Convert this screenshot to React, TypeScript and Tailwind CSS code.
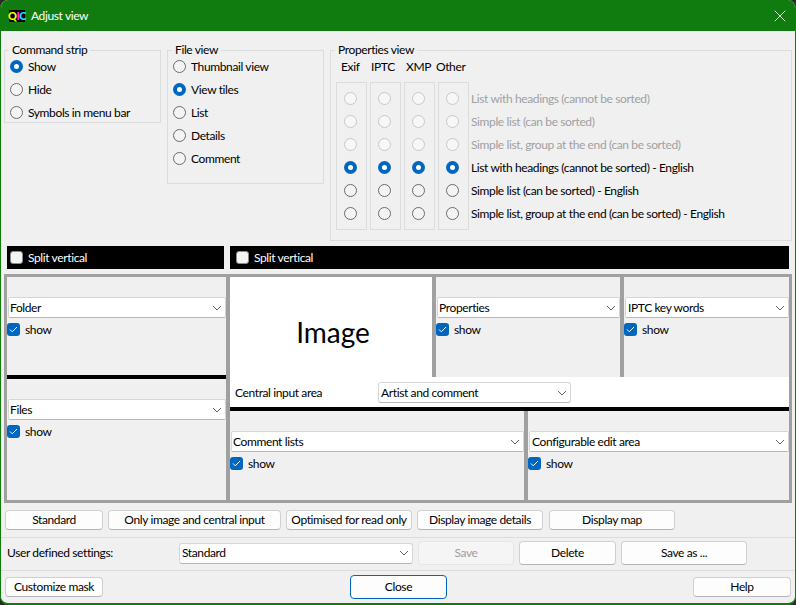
import { X } from "lucide-react";

const FONT = "font-['Lato','Noto_Sans',sans-serif]";

function Radio({ checked, disabled }: { checked?: boolean; disabled?: boolean }) {
  if (checked) {
    return (
      <span className="flex h-[13px] w-[13px] shrink-0 items-center justify-center rounded-full bg-[#0067c0]">
        <span className="h-[5px] w-[5px] rounded-full bg-white" />
      </span>
    );
  }
  return (
    <span
      className={
        disabled
          ? "h-[13px] w-[13px] shrink-0 rounded-full border border-[#c8c8c8] bg-[#f7f7f7]"
          : "h-[13px] w-[13px] shrink-0 rounded-full border border-[#6b6b6b] bg-[#f4f4f4]"
      }
    />
  );
}

function RadioRow({ label, checked }: { label: string; checked?: boolean }) {
  return (
    <div className="flex h-[23px] items-center gap-[5px]">
      <Radio checked={checked} />
      <span>{label}</span>
    </div>
  );
}

function Chevron() {
  return (
    <svg width="10" height="6" viewBox="0 0 10 6" fill="none" className="shrink-0">
      <path d="M1 1l4 4 4-4" stroke="#5f5f5f" strokeWidth="1" />
    </svg>
  );
}

function Combo({ label, className }: { label: string; className: string }) {
  return (
    <div
      className={`flex h-[21px] items-center justify-between rounded-[2px] border border-[#d6d6d6] border-b-[#b8b8b8] bg-white pr-[3px] ${className}`}
    >
      <span>{label}</span>
      <Chevron />
    </div>
  );
}

function ShowCheck() {
  return (
    <div className="mt-[5px] flex h-[13px] items-center gap-[5px]">
      <span className="flex h-[13px] w-[13px] items-center justify-center rounded-[3px] bg-[#0067c0]">
        <svg width="9" height="7" viewBox="0 0 9 7" fill="none">
          <path d="M1 3.5l2.3 2.3L8 1" stroke="#fff" strokeWidth="1" />
        </svg>
      </span>
      <span>show</span>
    </div>
  );
}

function SplitBar({ className }: { className: string }) {
  return (
    <div className={`flex h-[23px] items-center gap-[5px] bg-black text-white ${className}`}>
      <span className="h-[13px] w-[13px] rounded-[3px] border border-[#8a8a8a] bg-[#f4f4f4]" />
      <span>Split vertical</span>
    </div>
  );
}

function Btn({ label, className, disabled }: { label: string; className: string; disabled?: boolean }) {
  return (
    <button
      className={`flex h-[20px] items-center justify-center whitespace-nowrap rounded-[4px] border ${
        disabled
          ? "border-[#e6e6e6] bg-[#f5f5f5] text-[#9d9d9d]"
          : "border-[#d0d0d0] border-b-[#b4b4b4] bg-[#fdfdfd] text-black"
      } ${className}`}
    >
      {label}
    </button>
  );
}

const propRows = [
  { label: "List with headings (cannot be sorted)", disabled: true },
  { label: "Simple list (can be sorted)", disabled: true },
  { label: "Simple list, group at the end (can be sorted)", disabled: true },
  { label: "List with headings (cannot be sorted) - English", checked: true },
  { label: "Simple list (can be sorted) - English" },
  { label: "Simple list, group at the end (can be sorted) - English" },
];

export default function App() {
  return (
    <div className={`h-[605px] w-[796px] overflow-hidden bg-[#2a2a2a] text-[12px] leading-[16px] tracking-[-0.38px] text-black ${FONT}`}>
      <div className="flex h-full flex-col overflow-hidden rounded-[8px] border-x border-b-2 border-[#107c10] bg-[#f0f0f0]">
        {/* title bar */}
        <div className="-mx-px flex h-[31px] shrink-0 items-center bg-[#107c10] pl-[9px] pr-[9px] text-white">
          <span className="flex h-[12px] w-[16px] items-center justify-center bg-black text-[11px] font-black leading-none tracking-[-0.5px]">
            <span className="text-[#ffff00]">Q</span>
            <span className="text-[#ff30ff]">I</span>
            <span className="text-[#20e0ff]">C</span>
          </span>
          <span className="ml-[6px]">Adjust view</span>
          <X size={20} strokeWidth={1} className="ml-auto mr-[-3px] text-white" />
        </div>

        {/* group boxes */}
        <div className="mt-[11px] flex h-[199px] shrink-0 items-start pl-[3px]">
          <fieldset className="h-[81px] w-[157px] border border-[#dcdcdc] pl-[5px]">
            <legend className="-ml-[1px] px-[3px]">Command strip</legend>
            <div className="-mt-[3px]">
              <RadioRow label="Show" checked />
              <RadioRow label="Hide" />
              <RadioRow label="Symbols in menu bar" />
            </div>
          </fieldset>
          <fieldset className="ml-[6px] h-[142px] w-[157px] border border-[#dcdcdc] pl-[5px]">
            <legend className="-ml-[1px] px-[3px]">File view</legend>
            <div className="-mt-[3px]">
              <RadioRow label="Thumbnail view" />
              <RadioRow label="View tiles" checked />
              <RadioRow label="List" />
              <RadioRow label="Details" />
              <RadioRow label="Comment" />
            </div>
          </fieldset>
          <fieldset className="ml-[6px] h-[199px] w-[462px] border border-[#dcdcdc] pl-[5px]">
            <legend className="-ml-[1px] px-[3px]">Properties view</legend>
            <div className="-mt-[3px] flex h-[23px] items-center pl-[5px]">
              <span className="w-[30px]">Exif</span>
              <span className="w-[35px]">IPTC</span>
              <span className="w-[30px]">XMP</span>
              <span>Other</span>
            </div>
            <div className="mt-[4px] flex">
              {[0, 1, 2, 3].map((col) => (
                <div key={col} className="mr-[3px] h-[148px] w-[31px] border border-[#dcdcdc] pl-[7px] pt-[4px]">
                  {propRows.map((row) => (
                    <div key={row.label} className="flex h-[23px] items-center">
                      <Radio checked={row.checked} disabled={row.disabled} />
                    </div>
                  ))}
                </div>
              ))}
              <div className="-ml-[1px] pt-[5px]">
                {propRows.map((row) => (
                  <div
                    key={row.label}
                    className={row.disabled ? "flex h-[23px] items-center text-[#a0a0a0]" : "flex h-[23px] items-center"}
                  >
                    {row.label}
                  </div>
                ))}
              </div>
            </div>
          </fieldset>
        </div>

        {/* split bars */}
        <div className="mt-[5px] flex shrink-0 gap-[6px] pl-[6px]">
          <SplitBar className="w-[217px] pl-[3px]" />
          <SplitBar className="w-[559px] pl-[6px]" />
        </div>

        {/* layout preview */}
        <div className="ml-[3px] mt-[5px] flex h-[229px] w-[788px] shrink-0 border-[3px] border-[#a0a0a0]">
          <div className="flex w-[219px] shrink-0 flex-col">
            <div className="h-[98px] pl-0 pt-[20px]">
              <Combo label="Folder" className="ml-[1px] w-[218px] pl-[1px]" />
              <ShowCheck />
            </div>
            <div className="h-[4px] bg-black" />
            <div className="flex-1 pt-[20px]">
              <Combo label="Files" className="ml-[1px] w-[218px] pl-[1px]" />
              <ShowCheck />
            </div>
          </div>
          <div className="flex flex-1 flex-col border-l-4 border-[#a0a0a0]">
            <div className="flex h-[100px]">
              <div className="flex w-[202px] items-center justify-center bg-white pl-[4px] pt-[10px] text-[28px] leading-none tracking-normal">
                Image
              </div>
              <div className="w-[188px] border-l-4 border-[#a0a0a0] pt-[20px]">
                <Combo label="Properties" className="ml-[1px] w-[183px] pl-[1px]" />
                <ShowCheck />
              </div>
              <div className="flex-1 border-l-4 border-[#a0a0a0] pt-[20px]">
                <Combo label="IPTC key words" className="ml-[1px] w-[164px] pl-[2px]" />
                <ShowCheck />
              </div>
            </div>
            <div className="flex h-[30px] items-center bg-white pl-[5px] pt-[1px]">
              <span className="w-[143px]">Central input area</span>
              <Combo label="Artist and comment" className="w-[193px] rounded-[3px] pl-[2px]" />
            </div>
            <div className="h-[4px] bg-black" />
            <div className="flex flex-1">
              <div className="w-[294px] pt-[20px]">
                <Combo label="Comment lists" className="ml-[1px] w-[293px] pl-[1px]" />
                <ShowCheck />
              </div>
              <div className="flex-1 border-l-4 border-[#a0a0a0] pt-[20px]">
                <Combo label="Configurable edit area" className="ml-[1px] w-[260px] pl-[2px]" />
                <ShowCheck />
              </div>
            </div>
          </div>
        </div>

        {/* presets */}
        <div className="ml-[4px] mt-[7px] flex shrink-0">
          <Btn label="Standard" className="w-[98px]" />
          <Btn label="Only image and central input" className="ml-[5px] w-[173px]" />
          <Btn label="Optimised for read only" className="ml-[5px] w-[126px]" />
          <Btn label="Display image details" className="ml-[5px] w-[126px]" />
          <Btn label="Display map" className="ml-[6px] w-[126px]" />
        </div>
        <div className="-mx-px mt-[7px] h-px shrink-0 bg-[#dcdcdc]" />

        {/* user settings */}
        <div className="mt-[3px] flex h-[24px] shrink-0 items-center pl-[6px]">
          <span className="w-[172px]">User defined settings:</span>
          <Combo label="Standard" className="w-[234px] rounded-[3px] pl-[2px]" />
          <Btn label="Save" disabled className="ml-[5px] !h-[24px] w-[96px]" />
          <Btn label="Delete" className="ml-[5px] !h-[24px] w-[97px]" />
          <Btn label="Save as ..." className="ml-[5px] !h-[24px] w-[126px]" />
        </div>
        <div className="-mx-px mt-[5px] h-px shrink-0 bg-[#dcdcdc]" />

        {/* footer */}
        <div className="mt-[4px] flex items-center pl-[4px]">
          <Btn label="Customize mask" className="w-[98px]" />
          <button className="ml-[247px] flex h-[24px] w-[97px] items-center justify-center rounded-[4px] border-[1.5px] border-[#0067c0] bg-[#fdfdfd]">
            Close
          </button>
          <Btn label="Help" className="ml-[246px] w-[98px]" />
        </div>
      </div>
    </div>
  );
}
